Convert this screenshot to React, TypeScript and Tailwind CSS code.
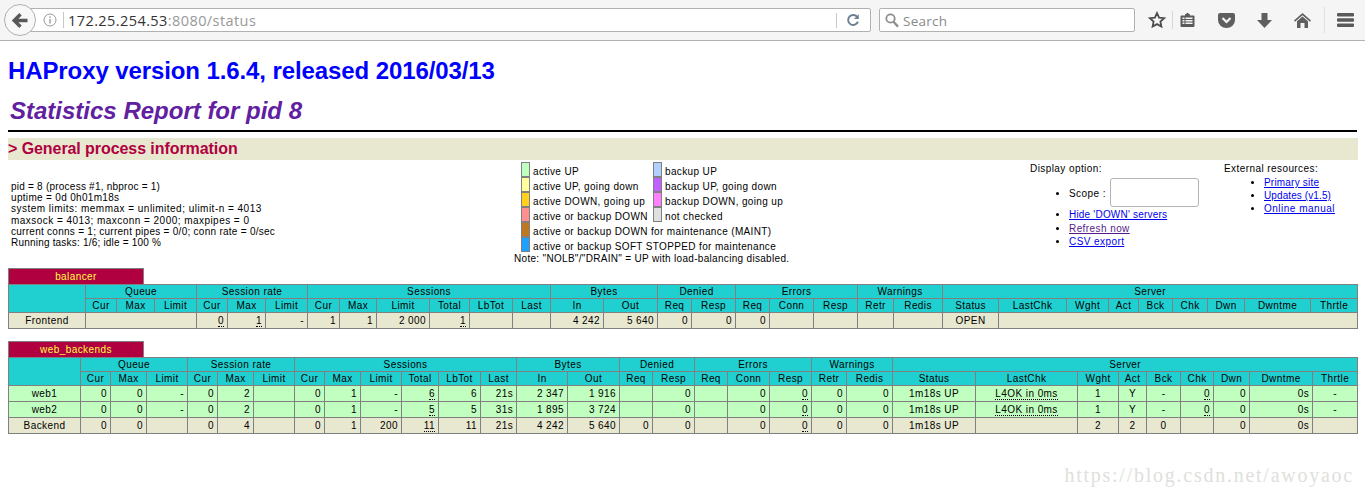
import React from "react";

const cols1 = ["w-[77px]","w-[31px]","w-[38px]","w-[42px]","w-[31px]","w-[38px]","w-[42px]","w-[32px]","w-[37px]","w-[53px]","w-[40px]","w-[43px]","w-[38px]","w-[53px]","w-[54px]","w-[34px]","w-[44px]","w-[34px]","w-[44px]","w-[44px]","w-[36px]","w-[49px]","w-[56px]","w-[68px]","w-[42px]","w-[30px]","w-[34px]","w-[35px]","w-[37px]","w-[66px]","w-[47px]"];
const cols2 = ["w-[72px]","w-[30px]","w-[36px]","w-[41px]","w-[30px]","w-[36px]","w-[41px]","w-[30px]","w-[36px]","w-[41px]","w-[37px]","w-[42px]","w-[36px]","w-[51px]","w-[52px]","w-[33px]","w-[42px]","w-[33px]","w-[42px]","w-[42px]","w-[35px]","w-[46px]","w-[83px]","w-[102px]","w-[41px]","w-[28px]","w-[34px]","w-[33px]","w-[36px]","w-[63px]","w-[45px]"];

const groups: [string, number][] = [["Queue",3],["Session rate",3],["Sessions",6],["Bytes",2],["Denied",2],["Errors",3],["Warnings",2],["Server",9]];
const subs = ["Cur","Max","Limit","Cur","Max","Limit","Cur","Max","Limit","Total","LbTot","Last","In","Out","Req","Resp","Req","Conn","Resp","Retr","Redis","Status","LastChk","Wght","Act","Bck","Chk","Dwn","Dwntme","Thrtle"];
const bd = "border border-[#808080]";

type Cell = string | { u: string } | { c: string } | { cu: string } | { span: number };

function renderCell(v: Cell, i: number) {
  let align = "text-right";
  let content: React.ReactNode = null;
  let span = 1;
  if (typeof v === "string") content = v;
  else if ("span" in v) span = v.span;
  else if ("u" in v) content = <span className="border-b border-dotted border-black">{v.u}</span>;
  else if ("c" in v) { align = "text-center"; content = v.c; }
  else { align = "text-center"; content = <span className="border-b border-dotted border-black">{v.cu}</span>; }
  return <td key={i} colSpan={span} className={`${bd} ${align} px-[3px] py-0 leading-[11px]`}>{content}</td>;
}

function StatTable({ name, cols, rows }: { name: string; cols: string[]; rows: { bg: string; cells: Cell[] }[] }) {
  return (
    <div>
      <div className="w-[136px] h-[16px] bg-[#b00040] text-[#ffff40] text-center leading-[15px] border border-b-0 border-[#808080]">{name}</div>
      <table className="table-fixed border-collapse w-[1349px]">
        <colgroup>{cols.map((c, i) => <col key={i} className={c} />)}</colgroup>
        <tbody>
          <tr className="bg-[#20d0d0] h-[14px]">
            <th rowSpan={2} className={bd}></th>
            {groups.map(([g, n]) => <th key={g} colSpan={n} className={`${bd} font-normal p-0 leading-[11px] text-center`}>{g}</th>)}
          </tr>
          <tr className="bg-[#20d0d0] h-[14px]">
            {subs.map((s, i) => <th key={i} className={`${bd} font-normal p-0 leading-[11px] text-center`}>{s}</th>)}
          </tr>
          {rows.map((r, i) => (
            <tr key={i} className={`${r.bg} h-[16px]`}>{r.cells.map(renderCell)}</tr>
          ))}
        </tbody>
      </table>
    </div>
  );
}

const u = (s: string) => ({ u: s });
const c = (s: string) => ({ c: s });
const cu = (s: string) => ({ cu: s });

const FE = "bg-[#e8e8d0]";
const UP = "bg-[#c0ffc0]";

const frontend: Cell[] = [c("Frontend"), { span: 3 }, u("0"), u("1"), "-", "1", "1", "2 000", u("1"), "", "", "4 242", "5 640", "0", "0", "0", "", "", "", "", c("OPEN"), { span: 8 }];
const web = (n: string, lb: string, last: string, i: string, o: string): Cell[] => [c(n), "0", "0", "-", "0", "2", "", "0", "1", "-", u(lb), lb, last, i, o, "", "0", "", "0", u("0"), "0", "0", c("1m18s UP"), cu("L4OK in 0ms"), c("1"), c("Y"), c("-"), u("0"), "0", "0s", c("-")];
const backend: Cell[] = [c("Backend"), "0", "0", "", "0", "4", "", "0", "1", "200", u("11"), "11", "21s", "4 242", "5 640", "0", "0", "", "0", u("0"), "0", "0", c("1m18s UP"), "", c("2"), c("2"), c("0"), "", "0", "0s", ""];

const legendTwo = [
  ["bg-[#c0ffc0]", "active UP", "bg-[#b0d0ff]", "backup UP"],
  ["bg-[#ffffa0]", "active UP, going down", "bg-[#c060ff]", "backup UP, going down"],
  ["bg-[#ffd020]", "active DOWN, going up", "bg-[#ff80ff]", "backup DOWN, going up"],
  ["bg-[#ff9090]", "active or backup DOWN", "bg-[#e0e0e0]", "not checked"],
];

function Swatch({ bg }: { bg: string }) {
  return <div className={`${bg} w-[9px] h-[15px] border border-[#808080] shrink-0`} />;
}

function Toolbar() {
  return (
    <div className="h-[41px] bg-[#f5f5f5] border-b border-[#b2b2b2] flex items-center relative">
      <div className="ml-[20px] w-[851px] h-[24px] bg-white border border-[#b1b1b1] rounded-r-[2px] flex items-center pl-[22px] pr-[8px] font-['Open_Sans',sans-serif] text-[14.5px]">
        <svg width="14" height="14" viewBox="0 0 14 14" className="shrink-0">
          <circle cx="7" cy="7" r="6" fill="none" stroke="#999" strokeWidth="1" />
          <rect x="6.3" y="6" width="1.4" height="4.5" fill="#999" />
          <rect x="6.3" y="3.4" width="1.4" height="1.5" fill="#999" />
        </svg>
        <div className="w-px h-[16px] bg-[#c8c8c8] ml-[6px] mr-[4px]" />
        <span className="text-[#333] pt-[2px]">172.25.254.53</span>
        <span className="text-[#999] pt-[2px]">:8080/status</span>
        <div className="flex-1" />
        <div className="w-px h-[15px] bg-[#c8c8c8] mr-[9px]" />
        <svg width="14" height="14" viewBox="0 0 14 14" className="mr-[2px]">
          <path d="M11.4 4.4A5 5 0 1 0 11.9 8.600" fill="none" stroke="#6d7f92" strokeWidth="1.900" />
          <path d="M12.800 1.200V6H8z" fill="#6d7f92" />
        </svg>
      </div>
      <div className="absolute left-[4px] top-[4px] w-[32px] h-[32px] rounded-full bg-[#f8f8f8] border border-[#b1b1b1] flex items-center justify-center">
        <svg width="16" height="15" viewBox="0 0 16 15">
          <path d="M8.500 1.200L2.200 7.500l6.300 6.300M3 7.500H15.500" fill="none" stroke="#595959" strokeWidth="3.400" />
        </svg>
      </div>
      <div className="ml-[8px] w-[256px] h-[24px] bg-white border border-[#b1b1b1] rounded-[2px] flex items-center pl-[5px] font-['Open_Sans',sans-serif] text-[13.5px] text-[#8a8a8a] tracking-[.25px]">
        <svg width="14" height="15" viewBox="0 0 14 15" className="mr-[4px]">
          <circle cx="5.5" cy="5.5" r="4.2" fill="none" stroke="#8e8e8e" strokeWidth="1.8" />
          <path d="M8.5 8.8L13 13.6" stroke="#8e8e8e" strokeWidth="2.4" />
        </svg>
        <span className="pt-[2px]">Search</span>
      </div>
      <div className="flex items-center ml-[13px] h-[24px]">
        <svg width="18" height="18" viewBox="0 0 18 18">
          <path d="M9 2l2.100 4.600 5 .6-3.700 3.400 1 5L9 13.100 4.600 15.600l1-5L1.900 7.200l5-.6z" fill="none" stroke="#4d4d4d" strokeWidth="1.800" />
        </svg>
        <div className="w-px h-[18px] bg-[#d8d8d8] ml-[6px] mr-[7px]" />
        <svg width="15" height="16" viewBox="0 0 15 16">
          <path d="M1.500 3.500h3.500V2.500L7.500.8 10 2.500v1h3.500a1 1 0 0 1 1 1v9.500a1 1 0 0 1-1 1h-12a1 1 0 0 1-1-1V4.500a1 1 0 0 1 1-1z" fill="#5a5a5a" />
          <path d="M2.500 5.500h2v1.500h-2zM5.500 5.500h7v1.500h-7zM2.500 8h2v1.500h-2zM5.500 8h7v1.500h-7zM2.500 10.500h2V12h-2zM5.500 10.500h7V12h-7z" fill="#f5f5f5" />
        </svg>
        <svg width="17" height="15" viewBox="0 0 17 15" className="ml-[23px]">
          <path d="M2 0h13a2 2 0 0 1 2 2v5a8.500 8 0 0 1-17 0V2a2 2 0 0 1 2-2z" fill="#5f5f5f" />
          <path d="M4.500 5L8.500 9l4-4" fill="none" stroke="#f5f5f5" strokeWidth="2.200" />
        </svg>
        <svg width="15" height="15" viewBox="0 0 15 15" className="ml-[22px]">
          <path d="M4.500 0h6v7H15l-7.500 8L0 7h4.500z" fill="#5f5f5f" />
        </svg>
        <svg width="17" height="15" viewBox="0 0 17 15" className="ml-[22px]">
          <path d="M8.500 0L17 7.500l-1 1.200-7.500-6.500-7.500 6.500-1-1.200z" fill="#5f5f5f" />
          <path d="M8.500 3.500L14 8.300V15h-3.500V10h-4v5H3V8.300z" fill="#5f5f5f" />
        </svg>
        <div className="w-px h-[26px] bg-[#e0e0e0] ml-[13px] mr-[12px]" />
        <svg width="17" height="14" viewBox="0 0 17 14">
          <path d="M1 0h15a1 1 0 0 1 1 1v1.500a1 1 0 0 1-1 1H1a1 1 0 0 1-1-1V1a1 1 0 0 1 1-1zM1 5.200h15a1 1 0 0 1 1 1v1.500a1 1 0 0 1-1 1H1a1 1 0 0 1-1-1V6.200a1 1 0 0 1 1-1zM1 10.500h15a1 1 0 0 1 1 1V13a1 1 0 0 1-1 1H1a1 1 0 0 1-1-1v-1.500a1 1 0 0 1 1-1z" fill="#5a5a5a" />
        </svg>
      </div>
    </div>
  );
}

const link = "text-[#0000ee] underline";

export default function App() {
  return (
    <div className="w-[1365px] h-[496px] overflow-hidden bg-white text-black font-['Liberation_Sans',sans-serif] text-[10px] tracking-[.42px]">
      <Toolbar />
      <div className="px-[8px] pt-[16px]">
        <h1 className="text-[24px] leading-[28px] font-bold text-[#0000ff] tracking-[-.1px]">HAProxy version 1.6.4, released 2016/03/13</h1>
        <h2 className="mt-[12px] pl-[2px] text-[24px] leading-[28px] font-bold italic text-[#60209f] tracking-normal">Statistics Report for pid 8</h2>
        <div className="mt-[5px] border-b-2 border-black" />
        <h3 className="mt-[6px] mr-[-1px] h-[22px] bg-[#e8e8d0] text-[#b00040] text-[16px] font-bold leading-[22px] tracking-[-.07px]">&gt; General process information</h3>

        <div className="flex h-[108px]">
          <div className="w-[506px] pl-[3px] pt-[21px] leading-[11.2px] whitespace-nowrap">
            <div className="tracking-[.23px]">pid = 8 (process #1, nbproc = 1)</div>
            <div className="tracking-[.32px]">uptime = 0d 0h01m18s</div>
            <div className="tracking-[.48px]">system limits: memmax = unlimited; ulimit-n = 4013</div>
            <div className="tracking-[.46px]">maxsock = 4013; maxconn = 2000; maxpipes = 0</div>
            <div className="tracking-[.27px]">current conns = 1; current pipes = 0/0; conn rate = 0/sec</div>
            <div className="tracking-[.2px]">Running tasks: 1/6; idle = 100 %</div>
          </div>
          <div className="w-[516px] pt-[2px] whitespace-nowrap tracking-[.36px]">
            {legendTwo.map(([a, at, b, bt]) => (
              <div key={at} className="flex h-[15px] items-center pl-[7px]">
                <Swatch bg={a} />
                <span className="ml-[3px] w-[120px] pt-[3px]">{at}</span>
                <Swatch bg={b} />
                <span className="ml-[3px] pt-[3px]">{bt}</span>
              </div>
            ))}
            <div className="flex h-[15px] items-center pl-[7px]"><Swatch bg="bg-[#c07820]" /><span className="ml-[3px] pt-[3px]">active or backup DOWN for maintenance (MAINT)</span></div>
            <div className="flex h-[15px] items-center pl-[7px]"><Swatch bg="bg-[#20a0ff]" /><span className="ml-[3px] pt-[3px]">active or backup SOFT STOPPED for maintenance</span></div>
            <div className="h-[14px] leading-[14px] tracking-[.31px]">Note: "NOLB"/"DRAIN" = UP with load-balancing disabled.</div>
          </div>
          <div className="w-[194px] pt-[3px] whitespace-nowrap">
            <div className="leading-[12px]">Display option:</div>
            <ul className="list-disc pl-[39px] mt-[2px]">
              <li className="h-[30px]">
                <div className="flex items-center h-[30px]"><span className="pt-[3px]">Scope :</span><div className="ml-[4px] w-[89px] h-[29px] bg-white border border-[#b4b4b4] rounded-[3px]" /></div>
              </li>
              <li className="h-[14px] mt-[1px] leading-[14px]"><span className={`${link} tracking-[.2px]`}>Hide 'DOWN' servers</span></li>
              <li className="h-[14px] leading-[14px]"><span className="text-[#551a8b] underline">Refresh now</span></li>
              <li className="h-[13px] leading-[12px]"><span className={link}>CSV export</span></li>
            </ul>
          </div>
          <div className="pt-[3px] whitespace-nowrap">
            <div className="leading-[12px]">External resources:</div>
            <ul className="list-disc pl-[40px] mt-[1px]">
              <li className="h-[13px] leading-[13px]"><span className={`${link} tracking-[.2px]`}>Primary site</span></li>
              <li className="h-[13px] leading-[13px]"><span className={`${link} tracking-[.1px]`}>Updates (v1.5)</span></li>
              <li className="h-[14px] leading-[14px]"><span className={`${link} tracking-[.5px]`}>Online manual</span></li>
            </ul>
          </div>
        </div>

        <div>
          <StatTable name="balancer" cols={cols1} rows={[{ bg: FE, cells: frontend }]} />
        </div>
        <div className="mt-[12px]">
          <StatTable name="web_backends" cols={cols2} rows={[
            { bg: UP, cells: web("web1", "6", "21s", "2 347", "1 916") },
            { bg: UP, cells: web("web2", "5", "31s", "1 895", "3 724") },
            { bg: FE, cells: backend },
          ]} />
        </div>
        <div className="mt-[30px] text-right pr-[3px] font-['Liberation_Serif',serif] text-[20px] leading-[22px] tracking-[1.75px] text-[#e0e0dc]">https://blog.csdn.net/awoyaoc</div>
      </div>
    </div>
  );
}
